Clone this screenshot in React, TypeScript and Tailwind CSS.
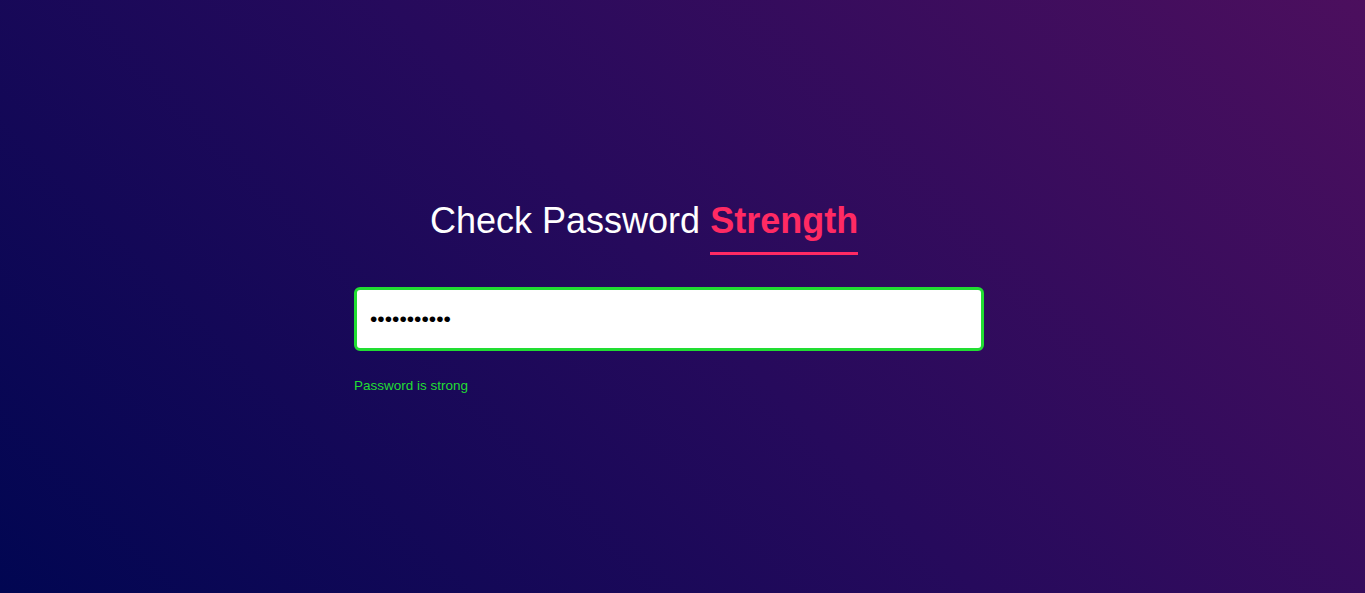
import { useState } from "react";

export default function App() {
    const [password, setPassword] = useState("abcdefgh12!");

    return (
        <div className="min-h-screen w-full bg-[linear-gradient(45deg,#010652_0%,#260a5c_50%,#4c0f5e_100%)] flex justify-center font-['Liberation_Sans',Arial,sans-serif]">
            <div className="w-[657px] pt-[200px]">
                <h1 className="pl-[76px] text-[36px] leading-[41px] text-white font-normal">
                    Check Password{" "}
                    <span className="inline-block font-bold text-[#ff2a63] border-b-[3px] border-[#ff2a63] pb-[11px]">
                        Strength
                    </span>
                </h1>

                <input
                    type="password"
                    value={password}
                    onChange={(e) => setPassword(e.target.value)}
                    className="mt-[32px] block w-[630px] h-[64px] px-[13px] bg-white border-[3px] border-[#22dd33] rounded-[6px] text-[21px] text-black outline-none"
                />

                <p className="mt-[27px] text-[13.5px] leading-[15px] text-[#22dd33]">Password is strong</p>
            </div>
        </div>
    );
}
